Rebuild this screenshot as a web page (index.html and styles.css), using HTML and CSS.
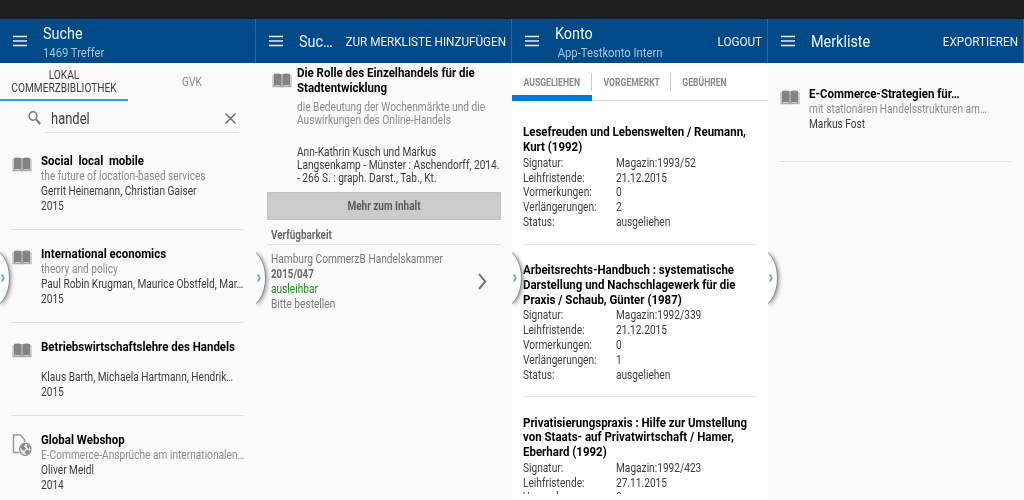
FILE: index.html
```html
<!DOCTYPE html>
<html lang="de">
<head>
<meta charset="utf-8">
<title>Commerzbibliothek</title>
<link rel="stylesheet" href="styles.css">
</head>
<body>
<svg class="defs" width="0" height="0">
  <defs>
    <symbol id="menu" viewBox="0 0 14 12"><path d="M0 1.5h14M0 6h14M0 10.5h14" stroke="#e8eef4" stroke-width="1.6"/></symbol>
    <symbol id="book" viewBox="0 0 20 15">
      <path d="M.5 2.200 1.600 1.600V12.600H18.400V1.600L19.500 2.200V14.200H11Q10 14.800 9 14.200H.5Z" fill="#aaa"/>
      <path d="M2 1Q6-.2 9.700 1.300V12.800Q6 11.600 2 12.500ZM18 1Q14-.2 10.300 1.300V12.800Q14 11.600 18 12.500Z" fill="#838383"/>
    </symbol>
    <symbol id="handle" viewBox="0 0 18 80">
      <ellipse cx="-10" cy="40" rx="19.500" ry="30" fill="#fafdfe" stroke="#8b8b8b" stroke-width="1"/>
      <path d="M1.700 36.300 4 40 1.700 43.700" fill="none" stroke="#5c9fc8" stroke-width="1.500"/>
    </symbol>
  </defs>
</svg>
<div class="status"></div>
<main class="panels">
  <section class="panel">
    <header class="bar">
      <svg class="menu"><use href="#menu"/></svg>
      <div class="heading"><div class="t h1">Suche</div><div class="t h2">1469 Treffer</div></div>
    </header>
    <nav class="tabs">
      <div class="tab on"><div class="t mid">LOKAL<br>COMMERZBIBLIOTHEK</div></div>
      <div class="tab"><div class="t mid">GVK</div></div>
    </nav>
    <div class="search">
      <svg class="lens" viewBox="0 0 13 14"><ellipse cx="5" cy="5" rx="3.900" ry="4.200" fill="none" stroke="#777" stroke-width="1.500"/><path d="M8 8.300 12.200 13" stroke="#777" stroke-width="1.900"/></svg>
      <div class="field"><div class="t query">handel</div><svg class="clear" viewBox="0 0 11 11"><path d="M.5.5 10.500 10.500M10.500.5.5 10.500" stroke="#666" stroke-width="1.400"/></svg></div>
    </div>
    <article class="item"><svg class="book"><use href="#book"/></svg><div class="lines"><div class="t b">Social&nbsp; local&nbsp; mobile</div><div class="t g">the future of location-based services</div><div class="t">Gerrit Heinemann, Christian Gaiser</div><div class="t">2015</div></div></article>
    <article class="item"><svg class="book"><use href="#book"/></svg><div class="lines"><div class="t b">International economics</div><div class="t g">theory and policy</div><div class="t">Paul Robin Krugman, Maurice Obstfeld, Mar…</div><div class="t">2015</div></div></article>
    <article class="item"><svg class="book"><use href="#book"/></svg><div class="lines"><div class="t b">Betriebswirtschaftslehre des Handels</div><div class="t g">&nbsp;</div><div class="t">Klaus Barth, Michaela Hartmann, Hendrik…</div><div class="t">2015</div></div></article>
    <article class="item"><svg class="web" viewBox="0 0 20 22"><path d="M7 18.500H1.500V1H8.500L12.500 5.500V8" fill="none" stroke="#999" stroke-width="1.500"/><ellipse cx="13.300" cy="15.300" rx="5.700" ry="6.200" fill="#e6e6e6" stroke="#8b8b8b" stroke-width="1.200"/><path d="M8.500 13 11 10 13.500 9.500 12 12.500 14 14.500 12 17 9.500 15ZM15 10.500 18 12.500 16.500 15 15 13ZM13 17 16 16 18 17 15.500 20.500 13.500 20Z" fill="#888"/></svg><div class="lines"><div class="t b">Global Webshop</div><div class="t g">E-Commerce-Ansprüche am internationalen…</div><div class="t">Oliver Meidl</div><div class="t">2014</div></div></article>
    <svg class="handle"><use href="#handle"/></svg>
  </section>

  <section class="panel">
    <header class="bar">
      <svg class="menu"><use href="#menu"/></svg>
      <div class="heading"><div class="t h1">Suc…</div></div>
      <div class="action add"><div class="t end">ZUR MERKLISTE HINZUFÜGEN</div></div>
    </header>
    <article class="detail"><svg class="book"><use href="#book"/></svg>
      <div class="lines"><div class="t b">Die Rolle des Einzelhandels für die<br>Stadtentwicklung</div>
      <div class="t g sub">die Bedeutung der Wochenmärkte und die<br>Auswirkungen des Online-Handels</div>
      <div class="t imprint">Ann-Kathrin Kusch und Markus<br>Langsenkamp - Münster : Aschendorff, 2014.<br>- 266 S. : graph. Darst., Tab., Kt.</div></div>
    </article>
    <div class="more"><div class="t mid">Mehr zum Inhalt</div></div>
    <div class="avail"><div class="t">Verfügbarkeit</div></div>
    <div class="copy"><div class="lines"><div class="t">Hamburg CommerzB Handelskammer</div><div class="t sig">2015/047</div><div class="t free">ausleihbar</div><div class="t">Bitte bestellen</div></div>
      <svg class="next" viewBox="0 0 9 17"><path d="M1 1 7.300 8.500 1 16" fill="none" stroke="#777" stroke-width="2"/></svg></div>
    <svg class="handle"><use href="#handle"/></svg>
  </section>

  <section class="panel white">
    <header class="bar">
      <svg class="menu"><use href="#menu"/></svg>
      <div class="heading"><div class="t h1">Konto</div><div class="t h2 account">App-Testkonto Intern</div></div>
      <div class="action"><div class="t end">LOGOUT</div></div>
    </header>
    <nav class="segments"><div class="seg on"><div class="t mid">AUSGELIEHEN</div></div><div class="seg"><div class="t mid">VORGEMERKT</div></div><div class="seg"><div class="t mid">GEBÜHREN</div></div></nav>
    <div class="loans">
      <article class="loan"><div class="t b">Lesefreuden und Lebenswelten / Reumann,<br>Kurt (1992)</div>
        <div class="facts"><div class="t">Signatur:<br>Leihfristende:<br>Vormerkungen:<br>Verlängerungen:<br>Status:</div><div class="t">Magazin:1993/52<br>21.12.2015<br>0<br>2<br>ausgeliehen</div></div></article>
      <article class="loan"><div class="t b">Arbeitsrechts-Handbuch : systematische<br>Darstellung und Nachschlagewerk für die<br>Praxis / Schaub, Günter (1987)</div>
        <div class="facts"><div class="t">Signatur:<br>Leihfristende:<br>Vormerkungen:<br>Verlängerungen:<br>Status:</div><div class="t">Magazin:1992/339<br>21.12.2015<br>0<br>1<br>ausgeliehen</div></div></article>
      <article class="loan"><div class="t b">Privatisierungspraxis : Hilfe zur Umstellung<br>von Staats- auf Privatwirtschaft / Hamer,<br>Eberhard (1992)</div>
        <div class="facts"><div class="t">Signatur:<br>Leihfristende:<br>Vormerkungen:</div><div class="t">Magazin:1992/423<br>27.11.2015<br>0</div></div></article>
    </div>
    <svg class="handle"><use href="#handle"/></svg>
  </section>

  <section class="panel">
    <header class="bar">
      <svg class="menu"><use href="#menu"/></svg>
      <div class="heading"><div class="t h1">Merkliste</div></div>
      <div class="action"><div class="t end">EXPORTIEREN</div></div>
    </header>
    <article class="item mark"><svg class="book"><use href="#book"/></svg><div class="lines"><div class="t b">E-Commerce-Strategien für…</div><div class="t g">mit stationären Handelsstrukturen am…</div><div class="t">Markus Fost</div></div></article>
    <svg class="handle"><use href="#handle"/></svg>
  </section>
</main>
</body>
</html>
```
FILE: styles.css
```css
* { box-sizing: border-box; }
body { margin: 0; height: 500px; overflow: hidden; background: #fafafa; font: 12.2px/15px Roboto, sans-serif; color: #3c3c3c; }
svg { display: block; flex: none; }
.defs { position: absolute; }
.status { height: 19px; background: #1e1e1e; }
.panels { display: grid; grid-template-columns: repeat(4, 256px); height: 481px; }
.panel { position: relative; overflow: hidden; background: #fafafa; min-width: 0; }
.white { background: #fff; }

/* Condensed text: laid out wide, then narrowed */
.t { --s: .833; width: calc(100% / var(--s)); transform: scaleX(var(--s)); transform-origin: 0 50%; white-space: nowrap; }
.mid { text-align: center; }
.end { --s: .866; text-align: right; }
.b { --s: .912; font-size: 12.6px; font-weight: 700; color: #000; }
.g { color: #8b8b8b; }

.bar { height: 44px; background: #004b87; color: #eef4f9; display: flex; align-items: center; padding: 0 5px 0 13px; border-right: 1px solid #2a6799; }
.menu { width: 14px; height: 12px; }
.heading { flex: 1; min-width: 0; padding-left: 16px; }
.h1 { --s: .9; font-size: 16px; line-height: 20px; margin-top: 2px; }
.h2 { --s: .9; font-size: 12.5px; line-height: 17px; color: #a9c3da; }
.account { padding-left: 3px; }
.action { width: 80px; font-size: 13.5px; }
.add { width: 161px; }

.tabs { display: flex; height: 38px; line-height: 12.5px; color: #888; }
.tab { width: 128px; display: flex; align-items: center; padding-top: 1px; }
.tab .t { flex: none; }
.tab.on { color: #3c3c3c; border-bottom: 2px solid #3b98de; }
.search { display: flex; padding: 10px 17px 0 28px; height: 36px; }
.lens { width: 13px; height: 14px; }
.field { display: flex; flex: 1; min-width: 0; margin: -7px 0 0 4px; padding: 4px 3px 0 6px; height: 29px; border-bottom: 1px solid #e1e1e1; }
.query { --s: .81; flex: 1; font-size: 16px; line-height: 22px; }
.clear { width: 11px; height: 11px; margin-top: 5px; }

.item { height: 93px; margin: 0 12px 0 11px; padding: 16px 0 0 1px; border-bottom: 1px solid #e3e3e3; display: flex; }
.item .b { margin-bottom: 1px; }
.book { width: 20px; height: 15px; margin-top: 4px; }
.web { width: 20px; height: 22px; margin-top: 2px; }
.lines { flex: 1; min-width: 0; padding-left: 9px; }
.item.mark { height: 99px; padding-top: 23px; }

.detail { display: flex; padding: 2px 0 0 16px; height: 129px; }
.detail .book { margin-top: 8px; }
.detail .lines { padding: 0 0 0 5px; }
.sub { margin-top: 6px; line-height: 13px; }
.imprint { margin-top: 19px; line-height: 13px; }
.more { margin: 0 11px; height: 28px; background: #cbcbcb; border: 1px solid #c4c4c4; font-weight: 700; color: #5c5c5c; }
.more .t { --s: .82; line-height: 27px; }
.avail { margin: 0 11px; height: 25px; padding: 8px 0 0 4px; border-bottom: 1px solid #e0e0e0; font-weight: 700; color: #6a6a6a; }
.avail .t { --s: .81; }
.copy { display: flex; padding: 7px 25px 0 15px; color: #777; }
.copy .lines { padding: 0; }
.sig { --s: .8; font-weight: 700; color: #666; }
.free { color: #1a921a; }
.next { width: 9px; height: 17px; margin-top: 21px; }

.segments { display: flex; height: 38px; border-bottom: 1px solid #d6d6d6; font-size: 10.5px; font-weight: 700; color: #888; }
.seg { width: 79.500px; padding-top: 12px; background: linear-gradient(#ccc, #ccc) 100% 10px / 1px 18px no-repeat; }
.seg .t { --s: .82; }
.seg:last-child { width: 67px; background: none; }
.seg.on { height: 38px; border-bottom: 6px solid #0078d7; }
.loans { height: 393px; overflow: hidden; padding: 6px 11px 0; line-height: 14.85px; }
.loan { padding: 18.400px 0 13.800px; border-bottom: 1px solid #e7e7e7; }
.facts { display: grid; grid-template-columns: 93px 1fr; margin-top: .6px; }
.handle { position: absolute; left: 0; top: 219px; width: 18px; height: 80px; filter: drop-shadow(1px 1px 2px #888); }
```
